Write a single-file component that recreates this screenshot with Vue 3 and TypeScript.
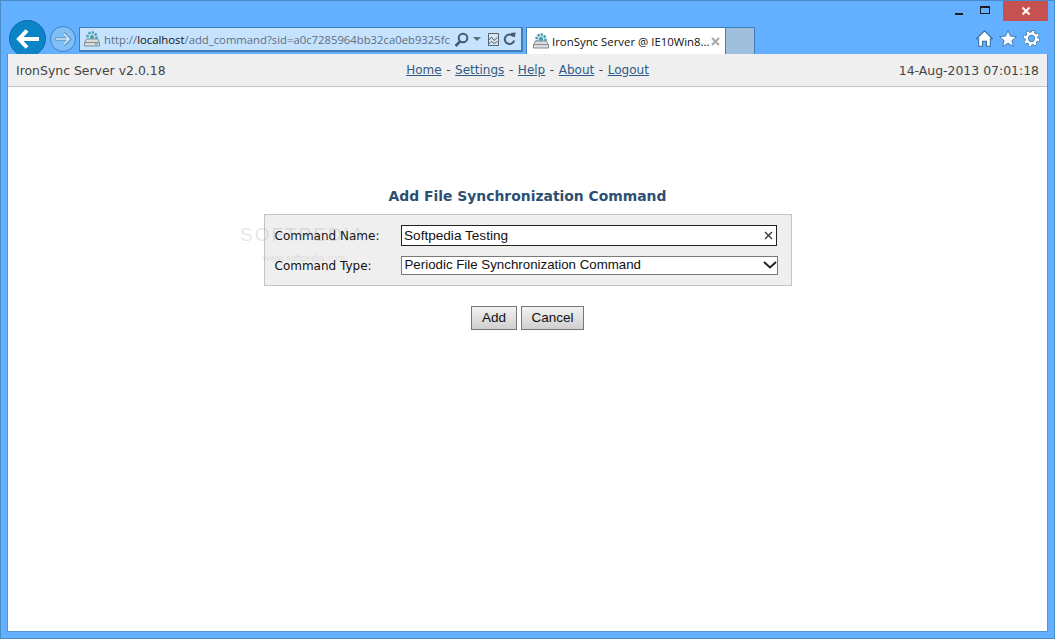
<script setup lang="ts">
const links: string[] = ['Home', 'Settings', 'Help', 'About', 'Logout']
</script>

<template>
  <div class="window">
    <div class="caption">
      <span class="win-btn min"><i></i></span>
      <span class="win-btn max"><i></i></span>
      <span class="win-btn close">
        <svg width="10" height="10" viewBox="0 0 10 10"><path d="M1.500 1.500l7 7M8.500 1.500l-7 7" stroke="#fff" stroke-width="2" fill="none" /></svg>
      </span>
    </div>

    <div class="toolbar">
      <button class="back" type="button" aria-label="Back">
        <svg width="24" height="22" viewBox="0 0 24 22"><path d="M11 2.500L3 11l8 8.500M3.500 11H23" stroke="#fff" stroke-width="4" fill="none" /></svg>
      </button>
      <button class="forward" type="button" aria-label="Forward">
        <svg width="18" height="16" viewBox="0 0 18 16">
          <path d="M1.500 8H15M9.500 2L15.500 8l-6 6" stroke="#5f97cb" stroke-width="3.400" fill="none" />
          <path d="M2 8H14.500M9.500 2.500L15 8l-5.500 5.500" stroke="#d6e9fb" stroke-width="1.600" fill="none" />
        </svg>
      </button>

      <div class="address">
        <svg class="favicon" width="16" height="16" viewBox="0 0 16 16">
          <circle cx="8" cy="6" r="4.500" fill="#cfe3ea" stroke="#3f9bb0" stroke-width="2.400" stroke-dasharray="2.200 1.200" />
          <circle cx="8" cy="6" r="2" fill="#3f9bb0" />
          <path d="M2.500 8h11l2 4v3H.5v-3z" fill="#dcdcdc" stroke="#77909b" />
          <path d="M1 11.500h14" stroke="#8a8a8a" />
          <rect x="11" y="12.500" width="2.500" height="1.200" fill="#3f9bb0" />
        </svg>
        <div class="url"><span>http://</span><b>localhost</b><span>/add_command?sid=a0c7285964bb32ca0eb9325fc</span></div>
        <svg class="addr-icon" width="15" height="15" viewBox="0 0 15 15"><circle cx="9" cy="6" r="4.300" fill="none" stroke="#47596a" stroke-width="2" /><path d="M6 9.500L1.500 14" stroke="#47596a" stroke-width="2.500" /></svg>
        <svg class="addr-icon caret" width="8" height="4" viewBox="0 0 8 4"><path d="M0 0h8L4 4z" fill="#5c6c78" /></svg>
        <svg class="addr-icon compat" width="11" height="15" viewBox="0 0 11 15"><path d="M.5 1.500h10v12H.5z" fill="#d7e5f2" stroke="#55646f" /><path d="M1 8l2.500-3 2.500 3.500 3.500-3M1 11.500l2.500-2 2.500 2 3.500-2" fill="none" stroke="#55646f" /></svg>
        <svg class="addr-icon refresh" width="13" height="14" viewBox="0 0 13 14"><path d="M10.500 4.500A4.800 4.800 0 1 0 11.200 8.500" fill="none" stroke="#47596a" stroke-width="2" /><path d="M7.500 1l5-.5-.5 5z" fill="#47596a" /></svg>
      </div>

      <div class="tab">
        <svg width="16" height="16" viewBox="0 0 16 16">
          <circle cx="8" cy="6" r="4.500" fill="#cfe3ea" stroke="#3f9bb0" stroke-width="2.400" stroke-dasharray="2.200 1.200" />
          <circle cx="8" cy="6" r="2" fill="#3f9bb0" />
          <path d="M2.500 8h11l2 4v3H.5v-3z" fill="#dcdcdc" stroke="#77909b" />
          <path d="M1 11.500h14" stroke="#8a8a8a" />
        </svg>
        <span class="tab-title">IronSync Server @ IE10Win8...</span>
        <svg class="tab-x" width="9" height="9" viewBox="0 0 9 9"><path d="M1 1l7 7M8 1L1 8" stroke="#a9a9a9" stroke-width="2" /></svg>
      </div>
      <div class="new-tab"></div>

      <div class="tools">
        <svg width="17" height="17" viewBox="0 0 16 16"><path d="M8 .8L15.500 8.300 13.500 8.300V15.300H9.800V10.500H6.200V15.300H2.500V8.300H.5z" fill="#fff" stroke="#2f6da6" stroke-width="1" /></svg>
        <svg width="18" height="17" viewBox="0 0 17 16"><path d="M8.500.5l2.300 5.200 5.700.5-4.300 3.700 1.300 5.500-5-3-5 3 1.300-5.500L.5 6.200l5.700-.5z" fill="#fff" stroke="#2f6da6" stroke-width=".8" /></svg>
        <svg width="17" height="17" viewBox="0 0 16 16">
          <circle cx="8" cy="8" r="4.500" fill="none" stroke="#2f6da6" stroke-width="4" />
          <circle cx="8" cy="8" r="6.200" fill="none" stroke="#2f6da6" stroke-width="3.400" stroke-dasharray="2.700 2.170" />
          <circle cx="8" cy="8" r="4.500" fill="none" stroke="#fff" stroke-width="2.600" />
          <circle cx="8" cy="8" r="6.200" fill="none" stroke="#fff" stroke-width="2.400" stroke-dasharray="2.100 2.770" stroke-dashoffset="-.3" />
        </svg>
      </div>
    </div>

    <div class="page">
      <header class="topbar">
        <div class="brand">IronSync Server v2.0.18</div>
        <nav class="nav">
          <template v-for="(link, i) in links" :key="link">
            <span v-if="i > 0" class="sep">-</span>
            <a href="#" @click.prevent>{{ link }}</a>
          </template>
        </nav>
        <div class="clock">14-Aug-2013 07:01:18</div>
      </header>

      <main class="content">
        <div class="watermark" aria-hidden="true">
          <div class="wm-main">SOFTPEDIA</div>
          <div class="wm-sub">www.softpedia.com</div>
        </div>
        <h1>Add File Synchronization Command</h1>
        <form class="form" @submit.prevent>
          <div class="row first">
            <label for="cmd-name">Command Name:</label>
            <div class="field">
              <input id="cmd-name" class="text" type="text" value="Softpedia Testing" />
              <svg class="clear" width="9" height="9" viewBox="0 0 9 9"><path d="M1 1l7 7M8 1L1 8" stroke="#333" stroke-width="1.300" /></svg>
            </div>
          </div>
          <div class="row">
            <label for="cmd-type">Command Type:</label>
            <div class="field">
              <select id="cmd-type" class="select">
                <option>Periodic File Synchronization Command</option>
              </select>
              <svg class="chevron" width="14" height="8" viewBox="0 0 14 8"><path d="M1 1l6 5.500L13 1" stroke="#222" stroke-width="2" fill="none" /></svg>
            </div>
          </div>
        </form>
        <div class="actions">
          <button type="button" class="btn add">Add</button>
          <button type="button" class="btn cancel">Cancel</button>
        </div>
      </main>
    </div>
  </div>
</template>

<style>
html, body { margin: 0; padding: 0; overflow: hidden; }
</style>

<style scoped>
.window {
  box-sizing: border-box;
  width: 1055px;
  height: 639px;
  background: #62b0ff;
  border: 1px solid #4a8ac6;
  padding: 0 6px 6px;
  display: flex;
  flex-direction: column;
}
.caption {
  height: 20px;
  display: flex;
  justify-content: flex-end;
  flex: none;
}
.win-btn { display: flex; align-items: center; justify-content: center; }
.min { width: 26px; }
.min i { display: block; width: 8px; height: 2px; background: #1c1c1c; margin-top: 6px; }
.max { width: 26px; margin-right: 5px; }
.max i { display: block; box-sizing: border-box; width: 10px; height: 8px; border: 1px solid #1c1c1c; border-top-width: 2px; margin-top: -2px; }
.close { width: 45px; background: #c75050; }
.toolbar {
  height: 33px;
  flex: none;
  display: flex;
  align-items: flex-start;
  position: relative;
}
.back {
  box-sizing: border-box;
  width: 37px;
  height: 37px;
  margin: -1px 0 0 2px;
  padding: 0;
  border-radius: 50%;
  border: 1px solid #0a6ba8;
  background: #0a84c6;
  display: flex;
  align-items: center;
  justify-content: center;
}
.forward {
  box-sizing: border-box;
  width: 26px;
  height: 26px;
  margin: 5px 0 0 4px;
  padding: 0;
  border-radius: 50%;
  border: 1px solid #3f85bd;
  background: #7fbff8;
  display: flex;
  align-items: center;
  justify-content: center;
}
.address {
  box-sizing: border-box;
  width: 444px;
  height: 25px;
  margin: 6px 0 0 3px;
  background: #c5e2ff;
  border: 1px solid #3d7fb6;
  border-bottom-width: 2px;
  border-right-width: 2px;
  display: flex;
  align-items: center;
  padding: 0 4px 0 4px;
  font: 11.3px "Open Sans", "Noto Sans", sans-serif;
  color: #5f6f7c;
}
.favicon { flex: none; margin-right: 4px; }
.url { flex: 1; min-width: 0; white-space: nowrap; overflow: hidden; }
.url b { font-weight: 400; color: #111; }
.addr-icon { flex: none; margin-left: 3px; }
.caret { margin-left: 4px; margin-right: 3px; }
.compat { margin-left: 4px; }
.refresh { margin-left: 4px; margin-right: 1px; }
.tab {
  box-sizing: border-box;
  width: 200px;
  height: 27px;
  margin: 6px 0 0 3px;
  background: #fff;
  border: 1px solid #3f80b8;
  border-bottom: 0;
  display: flex;
  align-items: center;
  padding: 0 5px 0 6px;
  font: 11.4px "Open Sans", "Noto Sans", sans-serif;
  color: #111;
}
.tab-title { flex: 1; margin-left: 3px; white-space: nowrap; overflow: hidden; }
.tab-x { flex: none; }
.new-tab {
  box-sizing: border-box;
  width: 29px;
  height: 27px;
  margin-top: 6px;
  background: #a0bfdc;
  border: 1px solid #3f80b8;
  border-left: 0;
  border-bottom: 0;
}
.tools {
  margin: 9px 8px 0 auto;
  display: flex;
  gap: 6px;
  align-items: center;
}
.page {
  flex: 1;
  min-height: 0;
  position: relative;
  z-index: 1;
  background: #fff;
  border: 1px solid #4f94d4;
  border-top: 0;
  display: flex;
  flex-direction: column;
}
.topbar {
  box-sizing: border-box;
  height: 33px;
  flex: none;
  background: #efefef;
  border-bottom: 1px solid #c4c4c4;
  display: grid;
  grid-template-columns: 1fr auto 1fr;
  align-items: center;
  padding: 0 8px;
  font: 12.45px "DejaVu Sans", Verdana, sans-serif;
  color: #444;
}
.nav { display: flex; gap: 4.600px; font-size: 12px; }
.nav a { color: #2f5a85; text-decoration: underline; }
.clock { text-align: right; }
.content {
  flex: 1;
  position: relative;
  display: flex;
  flex-direction: column;
  align-items: center;
  padding-top: 100px;
  font: 12px "DejaVu Sans", Verdana, sans-serif;
  color: #111;
}
h1 {
  margin: 0 0 9px;
  font: bold 13.9px/18px "DejaVu Sans", Verdana, sans-serif;
  color: #2d4f73;
}
.form {
  box-sizing: border-box;
  width: 528px;
  height: 72px;
  background: #efefef;
  border: 1px solid #c4c4c4;
  padding: 10px 13px 0 10px;
  display: flex;
  flex-direction: column;
  gap: 9px;
  position: relative;
}
.row { display: flex; align-items: center; height: 21px; }
.row label { width: 126px; flex: none; }
.field { position: relative; flex: 1; }
.text {
  display: block;
  box-sizing: border-box;
  width: 376px;
  height: 21px;
  margin: 0;
  padding: 0 20px 0 2.500px;
  border: 1px solid #222;
  background: #fff;
  font: 13.6px "Liberation Sans", Arial, sans-serif;
  color: #111;
  outline: none;
}
.select {
  display: block;
  box-sizing: border-box;
  width: 377px;
  height: 19px;
  margin: -1px 0 0;
  padding: 0 20px 2px 3px;
  border: 1px solid #7a7a7a;
  border-radius: 0;
  background: #fff;
  appearance: none;
  font: 13.3px "Liberation Sans", Arial, sans-serif;
  color: #111;
  outline: none;
}
.clear { position: absolute; right: 5px; top: 6px; }
.chevron { position: absolute; right: 1px; top: 4px; pointer-events: none; }
.actions { display: flex; gap: 4px; margin-top: 20px; }
.btn {
  box-sizing: border-box;
  height: 24px;
  padding: 0 0 2px;
  border: 1px solid #777;
  background: linear-gradient(#f2f2f2, #cfcfcf);
  font: 13.5px "Liberation Sans", Arial, sans-serif;
  color: #111;
}
.add { width: 46px; }
.cancel { width: 63px; }
.watermark {
  position: absolute;
  left: 232px;
  top: 137px;
  z-index: 2;
  pointer-events: none;
  color: rgba(140, 140, 140, 0.22);
}
.wm-main { font: 19px/22px "Liberation Sans", Arial, sans-serif; letter-spacing: 2px; }
.wm-sub { font: 9.500px/12px "Liberation Sans", Arial, sans-serif; margin: 6px 0 0 23px; }
</style>
